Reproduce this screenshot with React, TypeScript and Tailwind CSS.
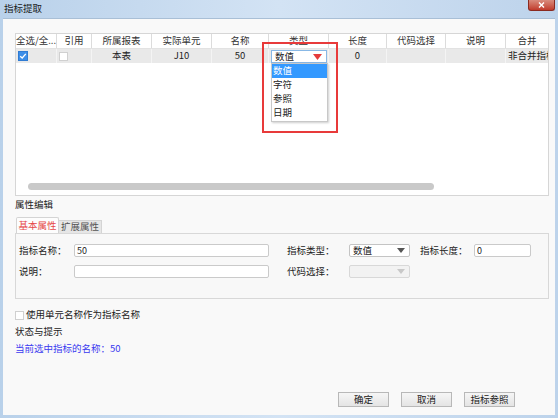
import React from "react";

const font = { fontFamily: '"Noto Sans CJK SC", "Noto Sans", sans-serif' };

type Col = { title: string; width: number; value?: string };

const cols: Col[] = [
  { title: "全选/全...", width: 41 },
  { title: "引用", width: 35 },
  { title: "所属报表", width: 60, value: "本表" },
  { title: "实际单元", width: 60, value: "J10" },
  { title: "名称", width: 57, value: "50" },
  { title: "类型", width: 60 },
  { title: "长度", width: 58, value: "0" },
  { title: "代码选择", width: 59 },
  { title: "说明", width: 60 },
  { title: "合并", width: 43, value: "非合并指标" },
];

function Check({ checked }: { checked?: boolean }) {
  if (checked) {
    return (
      <div className="w-[10px] h-[10px] bg-[#3d8ee8] border border-[#2f7bd3] flex items-center justify-center shrink-0">
        <svg width="8" height="8" viewBox="0 0 8 8">
          <path d="M1.2 4.2 L3.2 6 L6.8 1.8" stroke="#fff" strokeWidth="1.3" fill="none" />
        </svg>
      </div>
    );
  }
  return <div className="w-[9px] h-[9px] bg-white border border-[#d0d0d0] shrink-0" />;
}

function TypeCell() {
  return (
    <div className="relative w-full h-full">
      <div className="absolute left-[2px] top-[1px] w-[56px] h-[13px] bg-white border border-[#88b8e6] flex items-center justify-between pl-[3px] pr-[4px] z-10">
        <span className="text-[9.5px] leading-none text-[#222]">数值</span>
        <svg width="9" height="6" viewBox="0 0 9 6">
          <path d="M0 0 H9 L4.5 6 Z" fill="#e53b3b" />
        </svg>
      </div>
      <div className="absolute left-[2px] top-[14px] w-[57px] h-[59px] bg-white border border-[#c8c8c8] shadow-[1px_1px_2px_rgba(0,0,0,0.2)] z-10 flex flex-col text-[9.5px] leading-none text-[#222]">
        <div className="h-[14px] bg-[#3399ff] text-white flex items-center pl-[1px]">数值</div>
        <div className="h-[14px] flex items-center pl-[1px]">字符</div>
        <div className="h-[14px] flex items-center pl-[1px]">参照</div>
        <div className="h-[14px] flex items-center pl-[1px]">日期</div>
      </div>
    </div>
  );
}

function Btn({ label }: { label: string }) {
  return (
    <div className="w-[51px] h-[15px] border border-[#b8b8b8] bg-gradient-to-b from-[#f6f6f6] to-[#e4e4e4] flex items-center justify-center text-[9.5px] leading-none text-[#222] whitespace-nowrap">
      {label}
    </div>
  );
}

function Input({ value, width }: { value?: string; width: number }) {
  return (
    <div
      className="h-[13px] bg-white border border-[#cacaca] rounded-[2px] flex items-center pl-[2px] text-[9px] leading-none text-[#222] shrink-0"
      style={{ width }}
    >
      {value}
    </div>
  );
}

function Select({ value, disabled }: { value?: string; disabled?: boolean }) {
  return (
    <div
      className={
        "w-[61px] h-[13px] border rounded-[2px] flex items-center justify-between pl-[3px] pr-[4px] text-[9.5px] leading-none text-[#222] shrink-0 " +
        (disabled ? "bg-[#f2f2f2] border-[#d8d8d8]" : "bg-white border-[#c4c4c4]")
      }
    >
      <span>{value}</span>
      <svg width="8" height="5" viewBox="0 0 8 5">
        <path d="M0 0 H8 L4 5 Z" fill={disabled ? "#c8c8c8" : "#555"} />
      </svg>
    </div>
  );
}

const label = "text-[9.5px] leading-none whitespace-nowrap shrink-0";

export default function App() {
  return (
    <div
      className="relative w-[558px] h-[418px] overflow-hidden bg-gradient-to-r from-[#b9d1ea] via-[#d3e3f4] to-[#bdd3eb] flex flex-col"
      style={font}
    >
      {/* title bar */}
      <div className="h-[18px] flex items-start justify-between shrink-0">
        <span className="text-[9.5px] leading-none text-[#1a1a1a] pl-[4px] pt-[4px]">指标提取</span>
        <div className="mr-[3px] w-[27px] h-[11px] rounded-b-[3px] bg-gradient-to-b from-[#d88a7c] to-[#c0392b] border border-[#8a2a20] border-t-0 flex items-center justify-center">
          <svg width="7" height="6" viewBox="0 0 7 6">
            <path d="M1 0.5 L6 5.5 M6 0.5 L1 5.5" stroke="#fff" strokeWidth="1.4" />
          </svg>
        </div>
      </div>

      {/* body */}
      <div className="flex-1 mx-[3px] mb-[3px] bg-[#f9f9f9] border-t border-[#a9bfd6] flex flex-col pl-[12px] pr-[6px] pt-[14px] text-[#222]">
        {/* table */}
        <div className="relative w-[534px] h-[163px] bg-white border border-[#d6d6d6] overflow-hidden shrink-0">
          <div className="flex h-[15px] border-b border-[#e2e2e2]">
            {cols.map((c, i) => (
              <div
                key={i}
                className="shrink-0 border-r border-[#dcdcdc] flex items-center justify-center text-[9.5px] leading-none text-[#333] whitespace-nowrap overflow-hidden"
                style={{ width: c.width }}
              >
                {c.title}
              </div>
            ))}
          </div>
          <div className="flex h-[14px] bg-[#e9e9e9]">
            {cols.map((c, i) => (
              <div
                key={i}
                className={
                  "shrink-0 border-r border-[#f4f4f4] flex items-center text-[9.5px] leading-none text-[#222] whitespace-nowrap " +
                  (i < 2
                    ? "justify-start pl-[2px]"
                    : i === 9
                      ? "justify-start pl-[2px] overflow-hidden"
                      : "justify-center")
                }
                style={{ width: c.width }}
              >
                {i === 0 && <Check checked />}
                {i === 1 && <Check />}
                {i === 5 && <TypeCell />}
                {c.value}
              </div>
            ))}
          </div>
          <div className="absolute left-[12px] top-[149px] w-[406px] h-[7px] rounded-full bg-[#c9c9c9]" />
        </div>

        <div className={"mt-[4px] h-[11px] " + label}>属性编辑</div>

        {/* tabs */}
        <div className="mt-[6px] flex items-end h-[16px] pl-[1px]">
          <div className="w-[43px] h-[16px] bg-[#fdfdfd] border border-[#d4d4d4] border-b-0 rounded-t-[2px] flex items-center justify-center text-[9.5px] leading-none text-[#e54848] whitespace-nowrap">
            基本属性
          </div>
          <div className="w-[43px] h-[13px] bg-[#e6e6e6] border border-[#d4d4d4] border-b-0 border-l-0 flex items-center justify-center text-[9.5px] leading-none text-[#555] whitespace-nowrap">
            扩展属性
          </div>
        </div>
        <div className="w-[534px] h-[66px] border border-[#d8d8d8] bg-[#f8f8f8] flex flex-col gap-[8px] pt-[10px] pl-[3px]">
          <div className="flex items-center h-[13px]">
            <span className={"w-[55px] " + label}>指标名称：</span>
            <Input value="50" width={195} />
            <span className={"ml-[18px] w-[62px] " + label}>指标类型：</span>
            <Select value="数值" />
            <span className={"ml-[10px] w-[54px] " + label}>指标长度：</span>
            <Input value="0" width={57} />
          </div>
          <div className="flex items-center h-[13px]">
            <span className={"w-[55px] " + label}>说明：</span>
            <Input width={195} />
            <span className={"ml-[18px] w-[62px] " + label}>代码选择：</span>
            <Select disabled />
          </div>
        </div>

        <div className="mt-[11px] flex items-center gap-[2px] h-[10px]">
          <Check />
          <span className={label}>使用单元名称作为指标名称</span>
        </div>
        <div className={"mt-[7px] h-[11px] " + label}>状态与提示</div>
        <div className={"mt-[6px] h-[11px] text-[#3a3af0] " + label}>当前选中指标的名称：50</div>

        <div className="mt-auto mb-[8px] flex justify-end gap-[12px] pr-[34px]">
          <Btn label="确定" />
          <Btn label="取消" />
          <Btn label="指标参照" />
        </div>
      </div>

      {/* highlight annotation */}
      <div className="absolute left-[262px] top-[42px] w-[76px] h-[91px] border-2 border-[#e83a3a] pointer-events-none z-20" />
    </div>
  );
}
